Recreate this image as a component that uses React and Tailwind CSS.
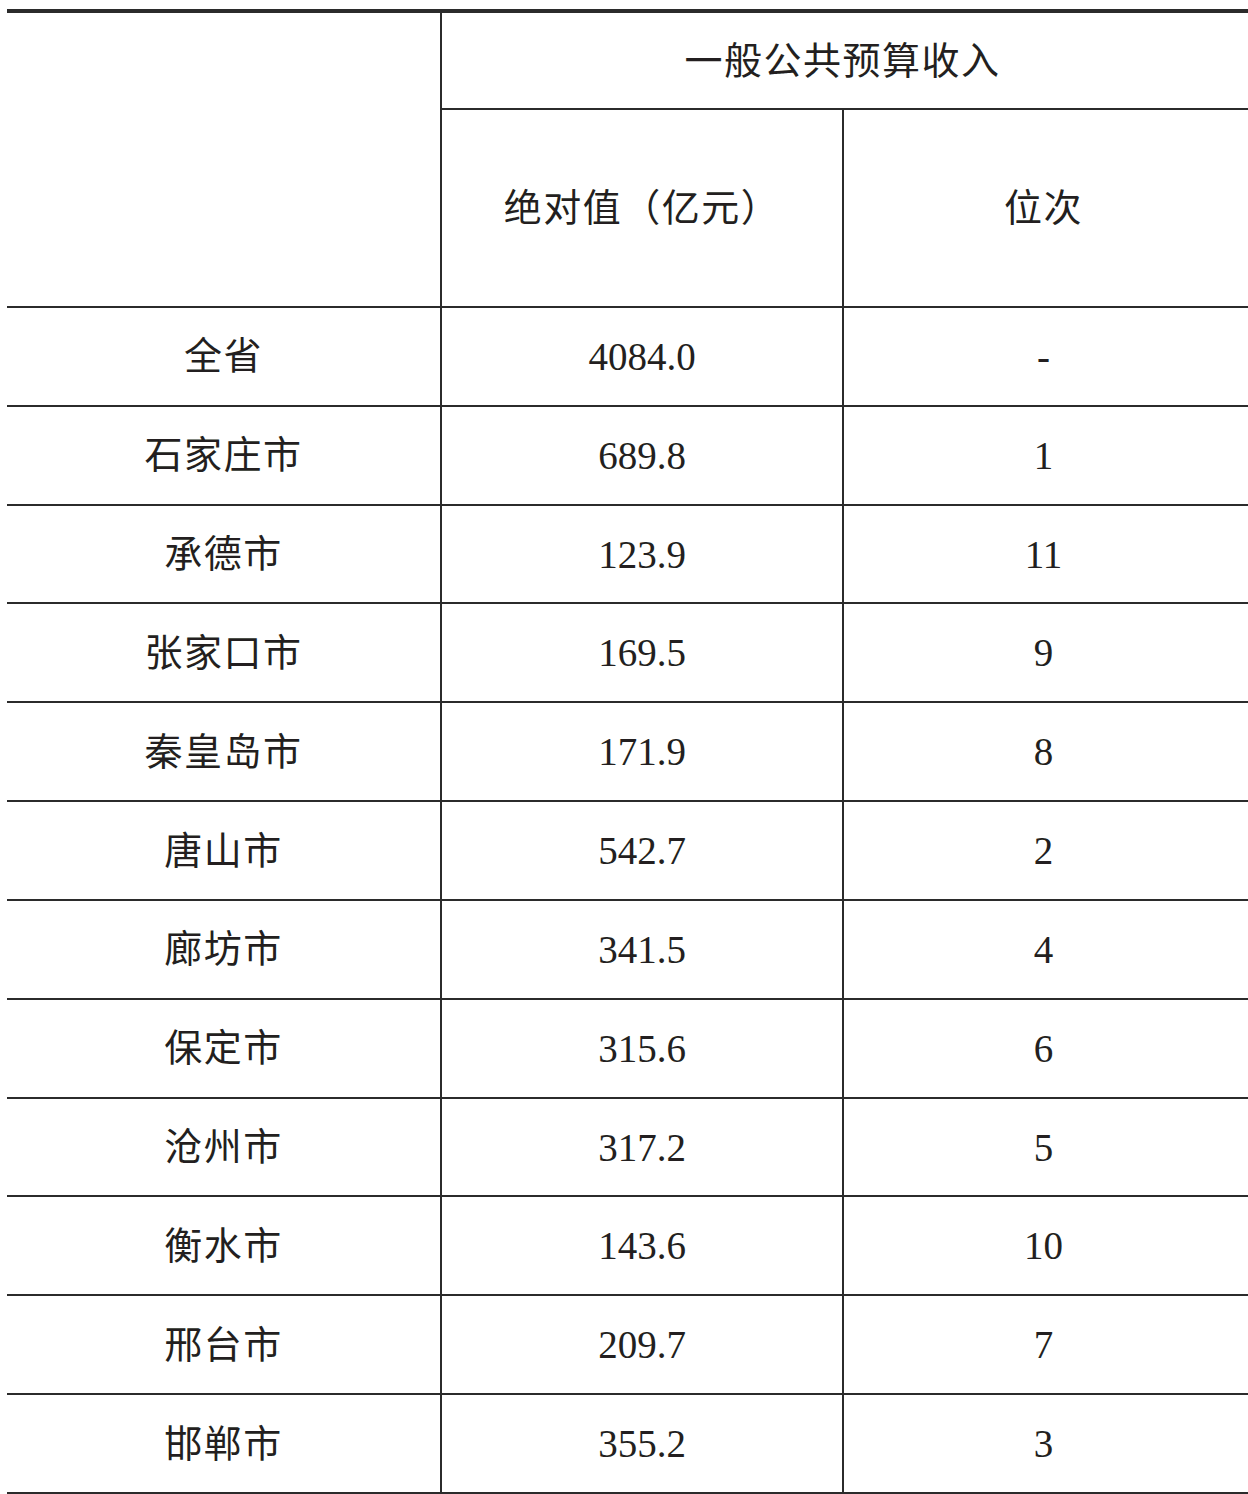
const ROWS = [
  ['全省', '4084.0', '-'],
  ['石家庄市', '689.8', '1'],
  ['承德市', '123.9', '11'],
  ['张家口市', '169.5', '9'],
  ['秦皇岛市', '171.9', '8'],
  ['唐山市', '542.7', '2'],
  ['廊坊市', '341.5', '4'],
  ['保定市', '315.6', '6'],
  ['沧州市', '317.2', '5'],
  ['衡水市', '143.6', '10'],
  ['邢台市', '209.7', '7'],
  ['邯郸市', '355.2', '3'],
]

const line = 'border-[#2b2b2b]'
const cell = `flex items-center justify-center border-b-2 ${line}`
const zh = 'text-[38px] tracking-[1.5px]'
const num = 'text-[39px]'

export default function App() {
  return (
    <div
      className="min-h-[1494px] w-[1248px] overflow-hidden bg-white pl-[7px] pt-[9px] leading-none text-[#231f20]"
      style={{ fontFamily: '"Liberation Serif", "Noto Sans CJK SC", serif' }}
    >
      <div className={`grid w-[1250px] grid-cols-[435px_402px_413px] border-t-4 ${line}`}>
        <div className={`row-span-2 border-r-2 border-b-2 ${line}`} />
        <div className={`${cell} ${zh} col-span-2 h-[97px] pr-[14px]`}>一般公共预算收入</div>
        <div className={`${cell} ${zh} h-[198px] border-r-2`}>绝对值（亿元）</div>
        <div className={`${cell} ${zh} h-[198px] pr-[14px]`}>位次</div>

        {ROWS.map(([name, value, rank]) => (
          <div key={name} className="contents">
            <div className={`${cell} ${zh} h-[98.83px] border-r-2`}>{name}</div>
            <div className={`${cell} ${num} h-[98.83px] border-r-2`}>{value}</div>
            <div className={`${cell} ${num} h-[98.83px] pr-[14px]`}>{rank}</div>
          </div>
        ))}
      </div>
    </div>
  )
}
